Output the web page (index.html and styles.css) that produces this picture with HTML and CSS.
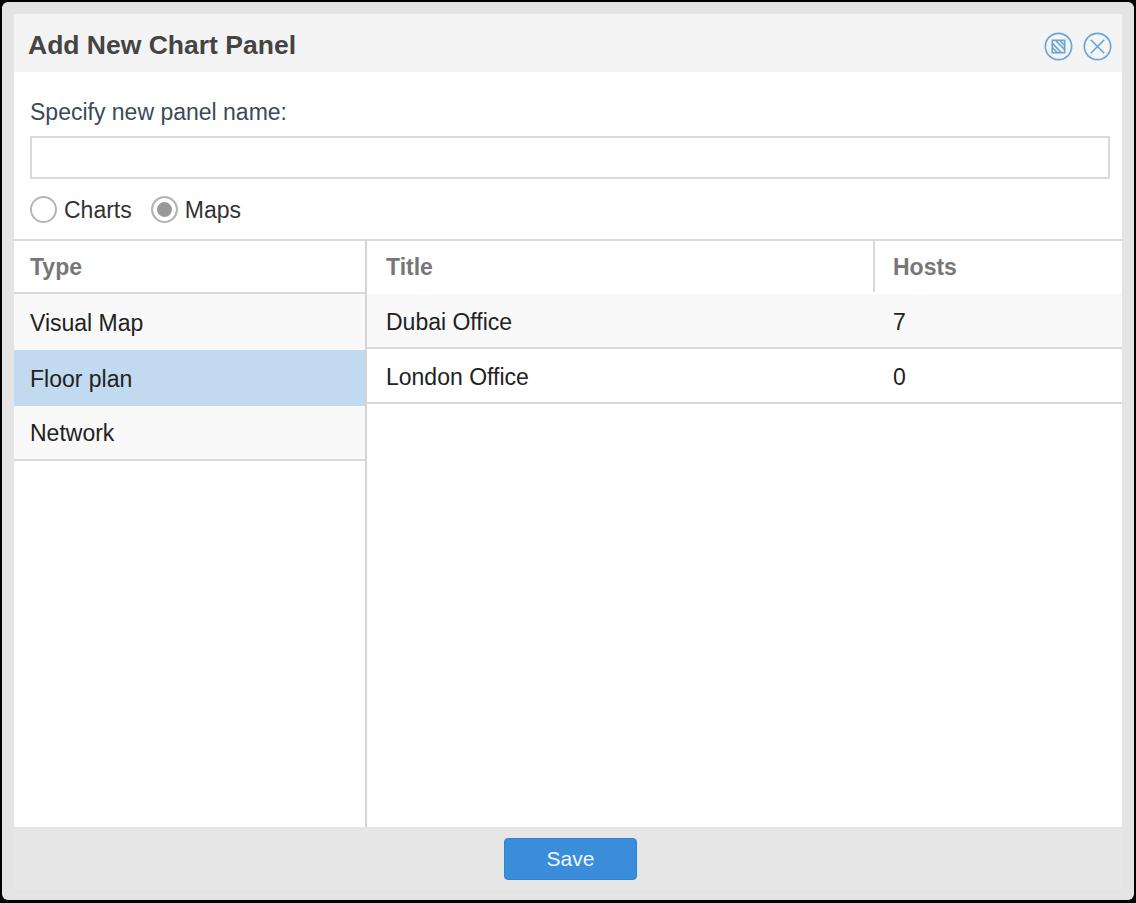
FILE: index.html
```html
<!doctype html>
<html>
<head>
<meta charset="utf-8">
<title>Add New Chart Panel</title>
<link rel="stylesheet" href="styles.css">
</head>
<body>
<div id="dialog">
  <div id="inner">
    <div class="header">
      <h1>Add New Chart Panel</h1>
      <div class="tools">
        <svg class="tool" viewBox="0 0 28 28">
          <circle cx="14" cy="14" r="12.7"/>
          <rect x="8" y="8" width="12" height="12"/>
          <path d="M8 11l9 9M8 15l5 5M11 8l9 9M15 8l5 5"/>
        </svg>
        <svg class="tool" viewBox="0 0 28 28">
          <circle cx="14" cy="14" r="12.7"/>
          <path d="M7.5 7.5l13 13M20.5 7.5l-13 13"/>
        </svg>
      </div>
    </div>

    <div class="form">
      <label class="name-label" for="panel-name">Specify new panel name:</label>
      <input type="text" id="panel-name" class="name-input">
      <div class="radios">
        <span class="radio"><i class="dot"></i>Charts</span>
        <span class="radio checked"><i class="dot"></i>Maps</span>
      </div>
    </div>

    <div class="lists">
      <div class="types">
        <div class="head">Type</div>
        <div class="type odd">Visual Map</div>
        <div class="type selected">Floor plan</div>
        <div class="type odd last">Network</div>
      </div>
      <div class="items">
        <div class="grid-head">
          <div class="col-title">Title</div>
          <div class="col-hosts">Hosts</div>
        </div>
        <div class="item odd">
          <div class="col-title">Dubai Office</div>
          <div class="col-hosts">7</div>
        </div>
        <div class="item">
          <div class="col-title">London Office</div>
          <div class="col-hosts">0</div>
        </div>
      </div>
    </div>

    <div class="footer">
      <button class="save">Save</button>
    </div>
  </div>
</div>
</body>
</html>
```

FILE: styles.css
```css
html, body { margin:0; padding:0; height:100%; }
body {
  background:#000;
  font-family:"Liberation Sans", Arial, sans-serif;
  font-size:23px;
  color:#222;
  overflow:hidden;
}
#dialog {
  box-sizing:border-box;
  width:1132px;
  height:898px;
  margin:2px 0 0 2px;
  padding:12px 12px 10px 12px;
  background:#e4e4e4;
  border-radius:6px;
}
#inner { height:100%; display:flex; flex-direction:column; }

.header {
  height:58px;
  flex:none;
  display:flex;
  align-items:center;
  justify-content:space-between;
  background:#f4f4f4;
  padding:0 10px 0 14px;
}
.header h1 { margin:5px 0 0 0; font-size:26.5px; font-weight:bold; color:#444; }
.tools { display:flex; gap:10px; margin-top:6px; }
.tool { width:29px; height:29px; fill:none; stroke:#6aa5d8; stroke-width:1.6; }

.form { background:#fff; height:167px; flex:none; box-sizing:border-box; padding:27px 12px 0 16px; }
.name-label { display:block; color:#3a4a58; line-height:26px; }
.name-input {
  display:block;
  box-sizing:border-box;
  width:1080px;
  height:43px;
  margin-top:11px;
  border:2px solid #d9d9d9;
  background:#fff;
  outline:none;
}
.radios { display:flex; gap:19px; margin-top:17px; }
.radio { display:flex; align-items:flex-start; gap:7px; line-height:29px; color:#333; }
.dot {
  box-sizing:border-box;
  width:27px;
  height:27px;
  border:2px solid #b5b5b5;
  border-radius:50%;
  background:#fff;
}
.checked .dot { background:#999; box-shadow:inset 0 0 0 4px #fff; }

.lists { flex:1; display:flex; background:#fff; border-top:2px solid #d9d9d9; min-height:0; }
.types { width:351px; flex:none; border-right:2px solid #d4d4d4; }
.head { box-sizing:border-box; height:53px; padding:0 16px; line-height:52px; font-weight:bold; color:#777; border-bottom:2px solid #d9d9d9; }
.type { box-sizing:border-box; height:56px; padding:0 16px; line-height:58px; color:#222; }
.type.odd { background:#f9f9f9; }
.type.selected { background:#c1daf0; }
.type.last { height:55px; line-height:55px; border-bottom:2px solid #d9d9d9; }

.items { flex:1; }
.grid-head { display:flex; height:53px; font-weight:bold; color:#777; line-height:52px; }
.grid-head .col-title { height:51px; border-right:2px solid #d9d9d9; }
.col-title { box-sizing:border-box; width:508px; padding-left:19px; }
.col-hosts { padding-left:18px; }
.item { display:flex; box-sizing:border-box; height:55px; line-height:56px; border-bottom:2px solid #d9d9d9; color:#222; }
.item.odd { background:#f9f9f9; }

.footer {
  flex:none;
  height:63px;
  background:#e6e6e6;
  display:flex;
  justify-content:center;
  padding:11px 0 0 5px;
  box-sizing:border-box;
}
.save {
  width:133px;
  height:42px;
  background:#3a8dd8;
  border:1px solid #2f84cf;
  border-radius:4px;
  color:#f2f7fc;
  font-family:"Liberation Sans", Arial, sans-serif;
  font-size:21px;
}
```
